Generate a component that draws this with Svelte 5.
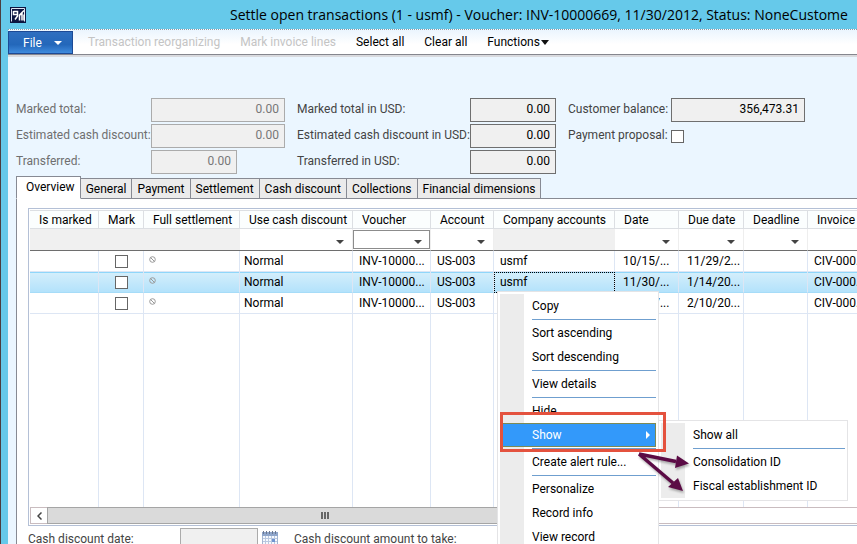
<script>
  const actions = [
    { label: 'Transaction reorganizing', disabled: true },
    { label: 'Mark invoice lines', disabled: true },
    { label: 'Select all' },
    { label: 'Clear all' },
    { label: 'Functions', menu: true }
  ];

  const groups = [
    {
      name: 'local',
      disabled: true,
      fields: [
        { id: 'marked', label: 'Marked total:', value: '0.00' },
        { id: 'discount', label: 'Estimated cash discount:', value: '0.00' },
        { id: 'transferred', label: 'Transferred:', value: '0.00', short: true }
      ]
    },
    {
      name: 'usd',
      fields: [
        { id: 'marked-usd', label: 'Marked total in USD:', value: '0.00', short: true },
        { id: 'discount-usd', label: 'Estimated cash discount in USD:', value: '0.00', short: true },
        { id: 'transferred-usd', label: 'Transferred in USD:', value: '0.00', short: true }
      ]
    },
    {
      name: 'customer',
      fields: [
        { id: 'balance', label: 'Customer balance:', value: '356,473.31' },
        { id: 'proposal', label: 'Payment proposal:', check: true }
      ]
    }
  ];

  const tabs = ['Overview', 'General', 'Payment', 'Settlement', 'Cash discount', 'Collections', 'Financial dimensions'];
  let activeTab = $state('Overview');

  const columns = [
    { label: 'Is marked', width: 69 },
    { label: 'Mark', width: 45 },
    { label: 'Full settlement', width: 96 },
    { label: 'Use cash discount', width: 113, filter: true },
    { label: 'Voucher', width: 78, filter: true, focused: true },
    { label: 'Account', width: 63, filter: true },
    { label: 'Company accounts', width: 121 },
    { label: 'Date', width: 64, filter: true },
    { label: 'Due date', width: 65, filter: true },
    { label: 'Deadline', width: 64, filter: true },
    { label: 'Invoice', width: 70, filter: true }
  ];

  const rows = [
    { discount: 'Normal', voucher: 'INV-10000...', account: 'US-003', company: 'usmf', date: '10/15/...', due: '11/29/2...', invoice: 'CIV-000...' },
    { discount: 'Normal', voucher: 'INV-10000...', account: 'US-003', company: 'usmf', date: '11/30/...', due: '1/14/20...', invoice: 'CIV-000...' },
    { discount: 'Normal', voucher: 'INV-10000...', account: 'US-003', company: 'usmf', date: '12/12/...', due: '2/10/20...', invoice: 'CIV-000...' }
  ];
  let selected = $state(1);

  const menu = [
    'Copy', '-', 'Sort ascending', 'Sort descending', '-', 'View details', '-', 'Hide', 'Show', '-',
    'Create alert rule...', '-', 'Personalize', 'Record info', 'View record'
  ];
  const submenu = ['Show all', '-', 'Consolidation ID', 'Fiscal establishment ID'];
</script>

{#snippet menuItems(items)}
  {#each items as item}
    {#if item === '-'}
      <hr />
    {:else}
      <button class="menu-item" class:open={item === 'Show'} role="menuitem">
        {item}
        {#if item === 'Show'}
          <svg width="4" height="8" viewBox="0 0 4 8"><path d="M0 0l4 4-4 4z" fill="#fff" /></svg>
        {/if}
      </button>
    {/if}
  {/each}
{/snippet}

<div class="window">
  <header class="title-bar">
    <svg class="logo" width="16" height="16" viewBox="0 0 16 16">
      <rect width="16" height="16" fill="#0c1440" />
      <path d="M1.500 14.500v-13h13v13" fill="none" stroke="#dfe6f2" />
      <path d="M3.500 4v3.500H7M3.500 4.500H7.500V9L5 12.500M9.500 13.500V8L14 3.500M9.500 8L12 7v6.500M14 7.500v6" fill="none" stroke="#fff" stroke-width="1.500" />
    </svg>
    <h1>Settle open transactions (1 - usmf) - Voucher: INV-10000669, 11/30/2012, Status: NoneCustome</h1>
  </header>

  <nav class="toolbar">
    <button class="file">
      File
      <svg width="8" height="4" viewBox="0 0 8 4"><path d="M0 0h8L4 4z" fill="#fff" /></svg>
    </button>
    <div class="actions">
      {#each actions as action}
        <button disabled={action.disabled}>
          {action.label}{#if action.menu}<svg width="8" height="5" viewBox="0 0 8 5"><path d="M0 0h8L4 5z" fill="#111" /></svg>{/if}
        </button>
      {/each}
    </div>
  </nav>

  <main>
    <form class="summary">
      {#each groups as group}
        <div class="group {group.name}" class:disabled={group.disabled}>
          {#each group.fields as field}
            <label for={field.id}>{field.label}</label>
            {#if field.check}
              <input id={field.id} type="checkbox" />
            {:else}
              <input id={field.id} type="text" class:short={field.short} value={field.value} readonly />
            {/if}
          {/each}
        </div>
      {/each}
    </form>

    <div class="tabs" role="tablist">
      {#each tabs as tab}
        <button role="tab" class:active={tab === activeTab} aria-selected={tab === activeTab} onclick={() => (activeTab = tab)}>{tab}</button>
      {/each}
    </div>

    <section class="panel">
      <div class="grid">
        <div class="table-area">
          <table>
            <colgroup>
              {#each columns as column}
                <col style="width: {column.width}px" />
              {/each}
            </colgroup>
            <thead>
              <tr class="heads">
                {#each columns as column}
                  <th scope="col">{column.label}</th>
                {/each}
              </tr>
              <tr class="filters">
                {#each columns as column}
                  <td class:editable={column.filter} class:focused={column.focused}>
                    {#if column.filter}
                      <select aria-label="Filter {column.label}"><option></option></select>
                    {/if}
                  </td>
                {/each}
              </tr>
            </thead>
            <tbody>
              {#each rows as row, i}
                <tr class:selected={i === selected} onclick={() => (selected = i)}>
                  <td></td>
                  <td class="mark"><input type="checkbox" aria-label="Mark" /></td>
                  <td class="full">
                    <svg width="7" height="7" viewBox="0 0 7 7"><circle cx="3.500" cy="3.500" r="2.800" /><path d="M1.500 1.500l4 4" /></svg>
                  </td>
                  <td>{row.discount}</td>
                  <td class="wide">{row.voucher}</td>
                  <td class="wide">{row.account}</td>
                  <td class="wide" class:cell-focus={i === selected}>{row.company}</td>
                  <td class="date">{row.date}</td>
                  <td class="date">{row.due}</td>
                  <td></td>
                  <td class="wide">{row.invoice}</td>
                </tr>
              {/each}
              <tr class="rest">
                {#each columns as column}
                  <td></td>
                {/each}
              </tr>
            </tbody>
          </table>
        </div>
        <div class="scrollbar">
          <button aria-label="Scroll left">
            <svg width="5" height="8" viewBox="0 0 5 8"><path d="M4.500 0.500L1 4l3.500 3.500" fill="none" stroke="#444" stroke-width="1.500" /></svg>
          </button>
          <div class="thumb"><i></i><i></i><i></i></div>
        </div>
      </div>

      <div class="details">
        <label class="date-label" for="discount-date">Cash discount date:</label>
        <input id="discount-date" type="text" readonly />
        <svg class="calendar" width="16" height="16" viewBox="0 0 16 16">
          <rect x="0.500" y="1.500" width="15" height="14" fill="#f6f9fd" stroke="#a3b5d1" />
          <rect x="0" y="1" width="16" height="4" fill="#8fa6cb" />
          <path d="M1.500 0v3M4.500 0v3M7.500 0v3M10.500 0v3M13.500 0v3" stroke="#6b7891" />
          <path d="M1 7.500h14M1 10.500h14M1 13.500h14M3.500 5v10M6.500 5v10M9.500 5v10M12.500 5v10" stroke="#b9c8e0" />
          <rect x="10" y="8" width="3" height="3" fill="#6f93cf" />
        </svg>
        <span>Cash discount amount to take:</span>
      </div>
    </section>
  </main>

  <div class="menu context" role="menu">
    {@render menuItems(menu)}
  </div>
  <div class="menu sub" role="menu">
    {@render menuItems(submenu)}
  </div>

  <div class="callout"></div>
  <svg class="arrows" width="56" height="46" viewBox="0 0 56 46">
    <g fill="#5b0b45" stroke="#5b0b45">
      <path d="M3 4L40 11.500M3 4L37 33" stroke-width="3.500" fill="none" />
      <path d="M41 5.500L53 13.500 39 18zM42 28L47 41 32 37z" stroke="none" />
    </g>
  </svg>
</div>

<style>
  :global(body) {
    margin: 0;
    overflow: hidden;
  }

  .window {
    position: relative;
    display: flex;
    flex-direction: column;
    box-sizing: border-box;
    height: 100vh;
    overflow: hidden;
    border-left: 1px solid #4b3d3f;
    background: #66c9ea;
    color: #000;
    font: 12px/16px Roboto, 'Open Sans', sans-serif;
  }

  button,
  input,
  select {
    box-sizing: border-box;
    margin: 0;
    padding: 0;
    border: 0;
    border-radius: 0;
    background: none;
    color: inherit;
    font: inherit;
  }

  .title-bar {
    display: flex;
    flex: none;
    align-items: center;
    gap: 204px;
    height: 29px;
    padding-left: 9px;
  }

  .logo {
    flex: none;
  }

  h1 {
    margin: 0;
    font-family: 'Open Sans', 'Noto Sans', sans-serif;
    font-size: 14px;
    line-height: 20px;
    font-weight: 400;
    white-space: nowrap;
  }

  .toolbar {
    display: flex;
    flex: none;
    align-items: stretch;
    height: 24px;
    margin-left: 7px;
    border-top: 1px dotted #8b9aa8;
    border-bottom: 1px solid #85868e;
    background: linear-gradient(#ebf5fe, #fff 60%);
  }

  .file {
    display: flex;
    align-items: center;
    justify-content: space-between;
    width: 65px;
    margin-top: 1px;
    padding: 0 10px 0 14px;
    border: 1px solid #1c4a96;
    background: linear-gradient(#2f6fc0, #2367ba 60%, #3f8bdd);
    color: #fff;
  }

  .actions {
    display: flex;
    align-items: center;
    gap: 20px;
    padding-left: 15px;
  }

  .actions button {
    display: flex;
    align-items: center;
    gap: 1px;
    white-space: nowrap;
  }

  .actions button:disabled {
    color: #c4c4c4;
  }

  main {
    display: flex;
    flex: 1;
    flex-direction: column;
    min-height: 0;
    margin-left: 7px;
    padding: 41px 0 0 8px;
    border-top: 2px solid #d9dade;
    background: #ebf6ff;
  }

  .summary {
    display: flex;
    gap: 12px;
    height: 78px;
  }

  .group {
    display: grid;
    grid-template-columns: 135px auto;
    grid-auto-rows: 24px;
    row-gap: 2px;
    align-items: center;
    align-content: start;
    color: #444;
    white-space: nowrap;
  }

  .usd {
    grid-template-columns: 173px auto;
  }

  .customer {
    grid-template-columns: 103px auto;
  }

  .group label {
    padding-bottom: 2px;
  }

  .group.disabled {
    color: #6f6f6f;
  }

  .group input[type='text'] {
    width: 134px;
    height: 24px;
    padding: 0 5px 2px;
    border: 1px solid #6f6f6f;
    background: #f0f0f0;
    color: #000;
    text-align: right;
  }

  .group.disabled input[type='text'] {
    border-color: #ababab;
    color: #777;
  }

  .group input[type='text'].short {
    width: 86px;
  }

  input[type='checkbox'] {
    appearance: none;
    display: block;
    width: 13px;
    height: 13px;
    border: 1px solid #666;
    background: #fff;
  }

  .tabs {
    position: relative;
    display: flex;
    flex: none;
    align-items: flex-end;
    height: 23px;
    margin-bottom: -1px;
  }

  .tabs button {
    height: 21px;
    padding: 0 5px;
    border: 1px solid #878a93;
    border-left-width: 0;
    background: #ebebeb;
    white-space: nowrap;
  }

  .tabs .active {
    height: 23px;
    padding: 0 5px 1px 9px;
    border-left-width: 1px;
    border-bottom-color: #fff;
    background: #fff;
  }

  .panel {
    display: flex;
    flex: 1;
    flex-direction: column;
    min-height: 0;
    padding: 9px 0 0 11px;
    border-top: 1px solid #878a93;
    border-left: 1px solid #878a93;
    background: #fff;
  }

  .grid {
    display: flex;
    flex: 1;
    flex-direction: column;
    min-height: 0;
    padding: 1px 0 1px 1px;
    border: 1px solid #b4c0d6;
    border-right: 0;
  }

  .table-area {
    flex: 1;
    min-height: 0;
    overflow: hidden;
  }

  table {
    width: 848px;
    height: 100%;
    table-layout: fixed;
    border-collapse: separate;
    border-spacing: 0;
  }

  th {
    box-sizing: border-box;
    padding: 0;
    border: 1px solid #dcdfe3;
    border-left: 0;
    background: #fbfefe;
    font-weight: 400;
    text-align: left;
    text-indent: 9px;
    white-space: nowrap;
  }

  .heads {
    height: 19px;
  }

  .filters {
    height: 22px;
  }

  td {
    box-sizing: border-box;
    padding: 0 0 0 4px;
    border-right: 1px solid #dde6f4;
    border-bottom: 1px solid #dde6f4;
    overflow: hidden;
    white-space: nowrap;
  }

  .filters td {
    position: relative;
    padding: 1px 0;
    border-right: 0;
    border-bottom: 1px solid #6e6e6e;
    background: #f0f0f0;
  }

  .filters .editable {
    border-right: 1px solid #eee;
    background: #fff;
  }

  .filters select {
    appearance: none;
    display: block;
    width: 100%;
    height: 19px;
  }

  .filters .focused select {
    border: 1px solid #8c8c8c;
  }

  .filters .editable::after {
    content: '';
    position: absolute;
    right: 8px;
    top: 11px;
    border: 4px solid transparent;
    border-top-color: #444;
    border-bottom: 0;
    pointer-events: none;
  }

  tbody tr {
    height: 21px;
  }

  .wide {
    padding-left: 6px;
  }

  .date {
    padding-left: 8px;
  }

  .mark {
    padding-left: 16px;
  }

  .full {
    padding: 0 0 4px 5px;
    line-height: 0;
  }

  .full svg {
    fill: none;
    stroke: #999;
  }

  .selected td {
    border-bottom-color: #a6dcf8;
    background: linear-gradient(#8fd6fa 1px, #d3eefb 1px, #b3e2fb);
  }

  .selected .cell-focus {
    outline: 1px dotted #000;
    outline-offset: -1px;
  }

  tbody .rest {
    height: auto;
  }

  .rest td {
    border-bottom: 0;
  }

  .scrollbar {
    display: flex;
    flex: none;
    box-sizing: border-box;
    height: 17px;
    border: 1px solid #c9bcbf;
    border-right: 0;
  }

  .scrollbar button {
    display: flex;
    flex: none;
    align-items: center;
    justify-content: center;
    width: 16px;
  }

  .thumb {
    display: flex;
    align-items: center;
    justify-content: center;
    gap: 1px;
    width: 67%;
    margin: -1px 0;
    border: 1px solid #a5a5a5;
    background: #dadada;
  }

  .thumb i {
    width: 2px;
    height: 7px;
    background: #666;
  }

  .details {
    display: flex;
    flex: none;
    align-items: flex-start;
    height: 16px;
    padding-top: 2px;
    color: #444;
    line-height: 22px;
    white-space: nowrap;
  }

  .date-label {
    flex: none;
    width: 152px;
  }

  .details input {
    flex: none;
    width: 78px;
    height: 24px;
    margin-right: 4px;
    border: 1px solid #ababab;
    background: #f0f0f0;
  }

  .calendar {
    flex: none;
    margin: 3px 16px 0 0;
  }

  .menu {
    position: absolute;
    box-sizing: border-box;
    padding: 2px;
    border: 1px solid #e4e4e6;
    background: linear-gradient(#ececec, #ececec) 2px 2px / 24px calc(100% - 4px) no-repeat #fff;
  }

  .context {
    left: 496px;
    top: 291px;
    width: 162px;
  }

  .sub {
    left: 657px;
    top: 420px;
    width: 190px;
  }

  .menu-item {
    display: flex;
    align-items: center;
    justify-content: space-between;
    width: 100%;
    height: 24px;
    padding: 0 6px 0 32px;
    white-space: nowrap;
  }

  .menu-item.open {
    border: 1px solid #7d8a55;
    padding: 0 5px 0 31px;
    background: #3399fa;
    color: #fff;
  }

  hr {
    height: 1px;
    margin: 1px 0 1px 32px;
    border: 0;
    background: #6f9fcf;
  }

  .callout {
    position: absolute;
    left: 499px;
    top: 412px;
    box-sizing: border-box;
    width: 166px;
    height: 40px;
    border: 3px solid #e4523e;
    pointer-events: none;
  }

  .arrows {
    position: absolute;
    left: 635px;
    top: 450px;
    filter: drop-shadow(1px 2px 1px rgba(0, 0, 0, 0.3));
    pointer-events: none;
  }
</style>
